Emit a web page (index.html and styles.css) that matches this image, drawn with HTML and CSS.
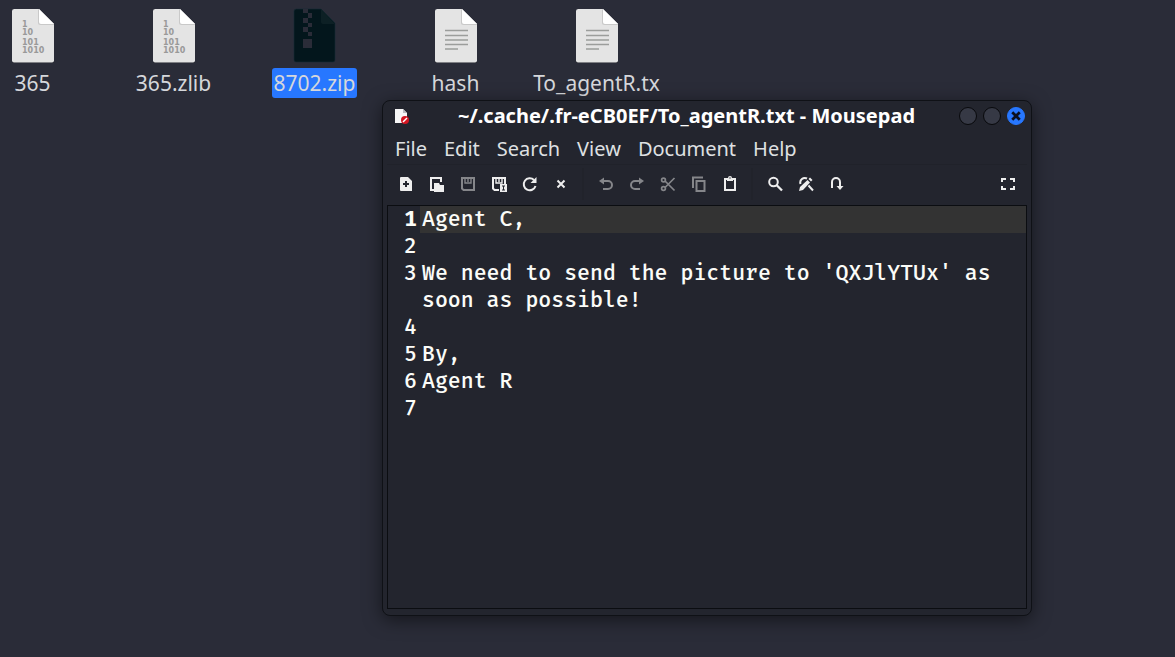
FILE: index.html
```
<!DOCTYPE html>
<html lang="en">
<head>
<meta charset="utf-8">
<title>Desktop</title>
<link rel="stylesheet" href="styles.css">
</head>
<body>
<svg class="symbols" aria-hidden="true">
  <symbol id="page" viewBox="0 0 44 56">
    <path d="M4 2H29L43 17V52.500Q43 55 40.500 55H3.500Q1 55 1 52.500V4.500Q1 2 4 2Z" fill="#1b1d24"/>
    <path d="M3.500 1H28L43 16V52.500Q43 54.500 41 54.500H3Q1 54.500 1 52.500V3Q1 1 3.500 1Z" fill="#e4e4e4"/>
    <path d="M27 1V14.500Q27 17 29.500 17H43V16Z" fill="#c9c9c9"/>
    <path d="M28 1V14Q28 16 30 16H43Z" fill="#fff"/>
  </symbol>
  <symbol id="text-file" viewBox="0 0 44 56">
    <use href="#page"/>
    <path d="M11 22.500H34M11 27.500H34M11 32H34M11 36.500H34M11 41H24" stroke="#9b9d9b" stroke-width="1.300"/>
  </symbol>
</svg>

<main class="desktop">
  <ul class="files">
    <li class="file"><svg class="file-icon" viewBox="0 0 44 56"><use href="#page"/><g class="digits"><text x="11" y="19">1</text><text x="11" y="27">10</text><text x="11" y="37">101</text><text x="11" y="45">1010</text></g></svg><span class="file-name">365</span></li>
    <li class="file"><svg class="file-icon" viewBox="0 0 44 56"><use href="#page"/><g class="digits"><text x="11" y="19">1</text><text x="11" y="27">10</text><text x="11" y="37">101</text><text x="11" y="45">1010</text></g></svg><span class="file-name">365.zlib</span></li>
    <li class="file"><svg class="file-icon" viewBox="0 0 44 56">
      <path d="M3.500 1H28L42 15V52Q42 54 40 54H3Q1 54 1 52V3Q1 1 3.500 1Z" fill="#03161c" stroke="#152c35" stroke-width=".6"/>
      <path d="M28 1V14Q28 16 30 16H42Z" fill="#0d2025"/>
      <path d="M10 1h5v4h-5zM15 5h4v5h-4zM10 10h5v5h-5zM15 15h4v4h-4zM10 19h5v5h-5zM15 24h4v4h-4zM10 31h9v9h-9z" fill="#2a2c38"/>
    </svg><span class="file-name selected">8702.zip</span></li>
    <li class="file"><svg class="file-icon"><use href="#text-file"/></svg><span class="file-name">hash</span></li>
    <li class="file"><svg class="file-icon"><use href="#text-file"/></svg><span class="file-name">To_agentR.tx</span></li>
  </ul>

  <section class="window" aria-label="Mousepad">
    <header class="titlebar">
      <svg class="app-icon" viewBox="0 0 16 16"><path d="M1 1H9L13 5V15H1Z" fill="#f6f6f6"/><path d="M9 1V5H13Z" fill="#b9bbc0"/><circle cx="11" cy="12" r="4" fill="#d31521"/><path d="M9 14L13 10" stroke="#fff" stroke-width="1.400"/></svg>
      <h1 class="title">~/.cache/.fr-eCB0EF/To_agentR.txt - Mousepad</h1>
      <div class="controls">
        <button class="control" aria-label="Minimize"></button>
        <button class="control" aria-label="Maximize"></button>
        <button class="control close" aria-label="Close"><svg class="close-icon" viewBox="0 0 8 8"><path d="M1 1L7 7M7 1L1 7" stroke="#0b1020" stroke-width="2.200"/></svg></button>
      </div>
    </header>
    <nav class="menubar">
      <button class="menu">File</button><button class="menu">Edit</button><button class="menu">Search</button><button class="menu">View</button><button class="menu">Document</button><button class="menu">Help</button>
    </nav>
    <div class="toolbar">
      <button class="tool" aria-label="New"><svg class="glyph" viewBox="0 0 16 16"><path d="M3 1H10L14 5V15H3Q2 15 2 14V2Q2 1 3 1Z" fill="currentColor"/><path d="M8 5V11M5 8H11" stroke="#23252e" stroke-width="2"/></svg></button>
      <button class="tool" aria-label="Open"><svg class="glyph" viewBox="0 0 16 16"><path d="M6 14H2V2H12V6" fill="none" stroke="currentColor" stroke-width="2"/><path d="M5 7H10L11 9H15V16H5Z" fill="currentColor"/></svg></button>
      <button class="tool" aria-label="Save" disabled><svg class="glyph" viewBox="0 0 16 16"><path d="M2 2H14V14H3.500L2 12.500Z" fill="none" stroke="currentColor" stroke-width="2"/><path d="M5 2V7H11V2M8 2V6" fill="none" stroke="currentColor" stroke-width="1.400"/></svg></button>
      <button class="tool" aria-label="Save as"><svg class="glyph" viewBox="0 0 16 16"><path d="M8 14H3.500L2 12.500V2H14V8" fill="none" stroke="currentColor" stroke-width="2"/><path d="M5 2V7H11V2M8 2V6" fill="none" stroke="currentColor" stroke-width="1.400"/><path d="M9 8H16V16H9Z" fill="currentColor"/><path d="M11 10H14M12.500 10V14M11 14H14" stroke="#23252e"/></svg></button>
      <button class="tool" aria-label="Reload"><svg class="glyph" viewBox="0 0 16 16"><path d="M13.500 10A6 6 0 1 1 12 4" fill="none" stroke="currentColor" stroke-width="2"/><path d="M14.500 1V7H8.500Z" fill="currentColor"/></svg></button>
      <button class="tool" aria-label="Close file"><svg class="glyph" viewBox="0 0 16 16"><path d="M4.500 4.500L11.500 11.500M11.500 4.500L4.500 11.500" stroke="currentColor" stroke-width="2"/></svg></button>
      <span class="divider"></span>
      <button class="tool" aria-label="Undo" disabled><svg class="glyph" viewBox="0 0 16 16"><path d="M3 5H10A4 4 0 0 1 10 13H5" fill="none" stroke="currentColor" stroke-width="2"/><path d="M1 5L6 1.500V8.500Z" fill="currentColor"/></svg></button>
      <button class="tool" aria-label="Redo" disabled><svg class="glyph" viewBox="0 0 16 16"><path d="M12 5H6A4 4 0 0 0 6 13H11" fill="none" stroke="currentColor" stroke-width="2"/><path d="M15 5L10 1.500V8.500Z" fill="currentColor"/></svg></button>
      <button class="tool" aria-label="Cut" disabled><svg class="glyph" viewBox="0 0 16 16"><g fill="none" stroke="currentColor" stroke-width="1.700"><circle cx="3.500" cy="4" r="1.900"/><circle cx="3.500" cy="12.500" r="1.900"/><path d="M5 5L14.500 14.500M5 11.500L14.500 2"/></g></svg></button>
      <button class="tool" aria-label="Copy" disabled><svg class="glyph" viewBox="0 0 16 16"><path d="M2 12V1.500H12M5.500 5H13.500V15H5.500Z" fill="none" stroke="currentColor" stroke-width="2"/></svg></button>
      <button class="tool" aria-label="Paste"><svg class="glyph" viewBox="0 0 16 16"><path d="M3 3H13V14H3Z" fill="none" stroke="currentColor" stroke-width="2"/><path d="M5 2H6A2 2 0 0 1 10 2H11V5H5Z" fill="currentColor"/><circle cx="8" cy="2" r=".7" fill="#23252e"/></svg></button>
      <span class="divider"></span>
      <button class="tool" aria-label="Find"><svg class="glyph" viewBox="0 0 16 16"><circle cx="6.500" cy="6" r="4.300" fill="none" stroke="currentColor" stroke-width="2"/><path d="M9.500 9L15 14.500" stroke="currentColor" stroke-width="2.300"/></svg></button>
      <button class="tool" aria-label="Find and replace"><svg class="glyph" viewBox="0 0 16 16"><path d="M2.500 8A4.600 4.600 0 0 1 9 2.500M10.500 9.500L15 14.500" fill="none" stroke="currentColor" stroke-width="2"/><path d="M1 15L2 11L9.500 4L12 6.500L5 14Z" fill="currentColor"/><path d="M10.500 3L12 1.500L14.500 4L13 5.500Z" fill="currentColor"/></svg></button>
      <button class="tool" aria-label="Go to"><svg class="glyph" viewBox="0 0 16 16"><path d="M3 12V6A4 4 0 0 1 11 6V12" fill="none" stroke="currentColor" stroke-width="2"/><path d="M7.500 10H14.500L11 14Z" fill="currentColor"/></svg></button>
      <button class="tool fullscreen" aria-label="Fullscreen"><svg class="glyph" viewBox="0 0 16 16"><path d="M2 6V3H6M10 3H14V6M14 10V13H10M6 13H2V10" fill="none" stroke="currentColor" stroke-width="2"/></svg></button>
    </div>
    <div class="editor">
      <ol class="gutter"><li class="number current">1</li><li class="number">2</li><li class="number wrapped">3</li><li class="number">4</li><li class="number">5</li><li class="number">6</li><li class="number">7</li></ol>
      <textarea class="text" aria-label="Document text" spellcheck="false">Agent C,

We need to send the picture to 'QXJlYTUx' as soon as possible!

By,
Agent R
</textarea>
    </div>
  </section>
</main>
</body>
</html>
```
FILE: styles.css
```
* { box-sizing: border-box; }
body { margin: 0; background: #2a2c38; font-family: "Noto Sans", sans-serif; font-size: 20px; color: #d5d7db; }
button { margin: 0; padding: 0; border: 0; background: none; color: inherit; font: inherit; }
.symbols { position: absolute; width: 0; height: 0; }
.desktop { position: relative; min-height: 100vh; overflow: hidden; }

.files { display: flex; gap: 76px; margin: 0; padding: 8px 0 0; list-style: none; }
.file { display: flex; flex: 0 0 65px; flex-direction: column; align-items: center; gap: 4px; min-width: 0; }
.file-icon { flex: none; width: 44px; height: 56px; }
.file-name { padding: 0 2px; border-radius: 3px; font-size: 21px; line-height: 30px; white-space: nowrap; }
.selected { background: #2777ff; }
.digits { fill: #999; font: bold 8px "DejaVu Sans", sans-serif; }

.window { position: absolute; inset: 100px 143px 41px 382px; display: flex; flex-direction: column; padding: 0 4px 6px; border: 1px solid #0f1116; border-radius: 8px; background: #23252e; box-shadow: 0 4px 18px rgba(0, 0, 0, .5); }
.titlebar { display: flex; align-items: center; height: 30px; padding: 0 2px 0 7px; }
.app-icon { width: 16px; height: 16px; }
.title { flex: 1; margin: 0; padding-left: 4px; color: #fff; font-size: 20px; font-weight: 700; line-height: 30px; text-align: center; white-space: nowrap; }
.controls { display: flex; gap: 6px; }
.control { width: 18px; height: 18px; border: 1px solid #08090c; border-radius: 50%; background: #363945; }
.close { display: grid; place-items: center; border-color: #2777ff; background: #2777ff; }
.close-icon { width: 10px; height: 10px; }
.menubar { display: flex; gap: 17px; height: 34px; padding: 0 8px; border-bottom: 1px solid #20222a; color: #dfe0e2; }
.menu { line-height: 36px; }
.toolbar { display: flex; align-items: center; height: 40px; padding: 0 4px 2px 3px; color: #eee; }
.tool { display: grid; place-items: center; width: 31px; height: 32px; }
.tool:disabled { color: #85868a; }
.glyph { width: 16px; height: 16px; }
.divider { width: 2px; height: 32px; margin: 0 6px; background: #21232b; }
.fullscreen { margin-left: auto; }

.editor { display: flex; flex: 1; border: 1px solid #0b0d11; color: #fbfcf8; font: 500 21px/27px "Fira Code", "Noto Sans Mono", "DejaVu Sans Mono", monospace; }
.gutter { flex: 0 0 32px; margin: 0; padding: 0 3px 0 0; list-style: none; text-align: right; }
.number { height: 27px; }
.wrapped { height: 54px; }
.current { font-weight: 700; }
.text { flex: 1; min-width: 0; padding: 0 2px; border: 0; outline: 0; background: linear-gradient(#333 27px, transparent 27px); color: inherit; font: inherit; resize: none; overflow: hidden; }
```
